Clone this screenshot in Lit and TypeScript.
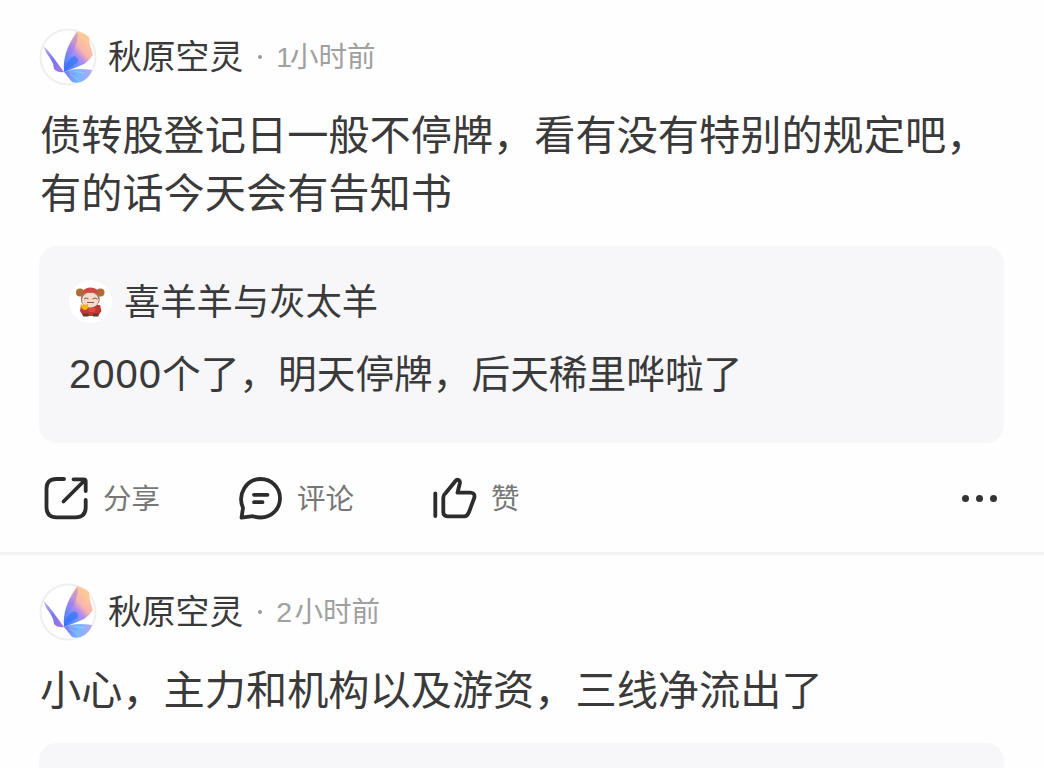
import { LitElement, html, css, svg, nothing } from 'lit';
import { customElement, property } from 'lit/decorators.js';

interface Quote {
  name: string;
  count: string;
  text: string;
}

interface Post {
  name: string;
  num: string;
  time: string;
  lines: string[];
  quote?: Quote;
}

const posts: Post[] = [
  {
    name: '秋原空灵',
    num: '1',
    time: '小时前',
    lines: ['债转股登记日一般不停牌，看有没有特别的规定吧，', '有的话今天会有告知书'],
    quote: { name: '喜羊羊与灰太羊', count: '2000', text: '个了，明天停牌，后天稀里哗啦了' },
  },
  {
    name: '秋原空灵',
    num: '2',
    time: '小时前',
    lines: ['小心，主力和机构以及游资，三线净流出了'],
  },
];

const icons = {
  share: svg`
    <path d="M20 4H12.500Q2.500 4 2.500 14V32Q2.500 42.300 12.500 42.300H31.500Q41.700 42.300 41.700 32V25" />
    <path d="M19.500 26.500L41 5M29.500 4.300H39.500Q41.700 4.300 41.700 6.500V16" />`,
  comment: svg`
    <path d="M3.500 42.700L5 33C-1 19 8.500 4 22.700 4C33.500 4 42 12.500 42 23.300C42 34 33.500 42.500 22.700 42.500Q18.500 42.500 15 41.200Z" />
    <path d="M16 19.800H29.500M16 27.200H24.500" />`,
  like: svg`
    <path d="M3.300 18.500V41" />
    <path d="M11.300 22.500Q11.300 20 13.500 18.300L23.500 6Q25 4 27 5.300Q28.300 6.300 27.800 8.500L25.500 17.700H38.500Q43.500 18 42.200 23L37 37Q35.500 41.300 32 41.300H15.500Q11.300 41.300 11.300 37Z" />`,
};

@customElement('butterfly-avatar')
export class ButterflyAvatar extends LitElement {
  static styles = css`
    :host {
      display: block;
      width: 58px;
      height: 58px;
    }
    svg {
      display: block;
    }
  `;

  render() {
    return html`
      <svg width="58" height="58" viewBox="0 0 58 58">
        <defs>
          <linearGradient id="wing" gradientUnits="userSpaceOnUse" x1="25" y1="42" x2="52" y2="18">
            <stop offset="0" stop-color="#3f75fa" />
            <stop offset=".35" stop-color="#6b93ff" />
            <stop offset=".55" stop-color="#b58bed" />
            <stop offset=".73" stop-color="#f8b3b0" />
            <stop offset="1" stop-color="#ffc898" />
          </linearGradient>
          <linearGradient id="left" x1="0" y1="0" x2="1" y2="1">
            <stop offset="0" stop-color="#c9b4f2" />
            <stop offset=".5" stop-color="#7777ee" />
            <stop offset="1" stop-color="#ad72e8" />
          </linearGradient>
          <linearGradient id="tail" x1="0" y1="0" x2="1" y2="0">
            <stop offset="0" stop-color="#7477f2" />
            <stop offset=".5" stop-color="#75b9ff" />
            <stop offset="1" stop-color="#b7a4f4" />
          </linearGradient>
          <filter id="soft" x="-10%" y="-10%" width="120%" height="120%">
            <feGaussianBlur stdDeviation=".6" />
          </filter>
        </defs>
        <circle cx="29" cy="29" r="27.500" fill="#fff" stroke="#efeff1" stroke-width="2" />
        <g filter="url(#soft)">
          <path fill="url(#left)" d="M4.500 18Q9 22 14 29L25 44Q19 45 15 41Q15 36 11.500 31Q6.500 25 4.500 18Z" />
          <path fill="url(#wing)" d="M25 44Q23 24 38 3.500Q44 4 50 9Q50 15 54 27Q51 32 45 36Q36 40 25 44Z" />
          <path fill="#8b78f0" opacity=".45" d="M26 35Q28 18 38 4Q41 16 26 35Z" />
          <path fill="#2f70fb" opacity=".65" d="M25 43Q27 32 35 28Q41 30 38 35Q31 39 25 43Z" />
          <path fill="url(#tail)" d="M25 44Q37 39 53 42Q51 49 44 53Q38 56 33 54Q29 49 25 44Z" />
          <path fill="none" stroke="#a5d0ff" stroke-width="1" opacity=".6" d="M30 44Q38 43 46 45M31 46Q37 49 40 53" />
        </g>
      </svg>
    `;
  }
}

@customElement('lamb-avatar')
export class LambAvatar extends LitElement {
  static styles = css`
    :host {
      display: block;
      width: 44px;
      height: 44px;
    }
    svg {
      display: block;
    }
  `;

  render() {
    return html`
      <svg width="44" height="44" viewBox="0 0 44 44">
        <defs>
          <filter id="soft">
            <feGaussianBlur stdDeviation=".5" />
          </filter>
        </defs>
        <circle cx="21.500" cy="22.500" r="21.500" fill="#fff" />
        <g filter="url(#soft)">
          <circle cx="11" cy="13.500" r="4" fill="#b06c35" />
          <circle cx="31.500" cy="13.500" r="4" fill="#b06c35" />
          <path fill="#bd3b30" d="M12 26H31L32.500 32L29 37H14L11 32Z" />
          <ellipse cx="21.300" cy="20" rx="9.500" ry="9" fill="#a9705d" />
          <ellipse cx="21.300" cy="21" rx="8.300" ry="7.500" fill="#f4dacb" />
          <path fill="#cf4943" d="M12.500 15Q14 8.500 21.500 8.500Q29 8.500 30.500 15Q25 12 21.500 14Q17 12 12.500 15Z" />
          <path fill="none" stroke="#82594e" stroke-width="1" d="M15 20Q17 18 19.500 20M23.500 20Q26 18 28.500 20M18 23.500H25" />
          <path fill="#edb719" d="M11.500 25L14 26L19 25Q20 31 15.500 31Q12 30 11.500 25Z" />
          <path fill="#dd4b3a" d="M19 29H27L26 33H20Z" />
          <path fill="#73302b" d="M14 34.500H19.500V37.500H14ZM24 34.500H29.500V37.500H24Z" />
        </g>
      </svg>
    `;
  }
}

@customElement('post-card')
export class PostCard extends LitElement {
  @property({ type: Object }) post!: Post;

  static styles = css`
    :host {
      display: block;
      padding: 28px 40px 0 39px;
      color: #3a3a3a;
    }
    .head {
      display: flex;
      align-items: center;
      height: 58px;
      white-space: nowrap;
    }
    .name {
      margin-left: 11px;
      padding-bottom: 5px;
      font-size: 33.8px;
    }
    .dot {
      width: 4px;
      height: 4px;
      margin: 0 14px 0 15px;
      border-radius: 50%;
      background: #999;
    }
    .time {
      padding-bottom: 6px;
      font-size: 28.5px;
      color: #a0a0a0;
    }
    .num {
      font-family: 'Liberation Sans', sans-serif;
    }
    .time .num {
      letter-spacing: 2.5px;
    }
    .time .num.one {
      letter-spacing: -2px;
    }
    .body {
      margin-top: 17px;
      padding-left: 1px;
      font-size: 41.2px;
      line-height: 58px;
      white-space: nowrap;
    }
    .quote {
      box-sizing: border-box;
      height: 197px;
      margin-top: 27px;
      padding: 33px 30px 0;
      border-radius: 18px;
      background: #f7f7fa;
      white-space: nowrap;
    }
    .quote-head {
      display: flex;
      align-items: center;
      gap: 11px;
      height: 44px;
      font-size: 36.3px;
    }
    .quote-head span {
      padding-bottom: 4px;
    }
    .quote-text {
      margin-top: 20px;
      font-size: 38.7px;
      line-height: 56px;
    }
    .quote-text .num {
      font-size: 40px;
      letter-spacing: 1px;
    }
    .actions {
      display: flex;
      align-items: center;
      height: 109px;
      font-size: 28.5px;
      color: #777;
    }
    .action {
      display: flex;
      align-items: center;
      gap: 12px;
      width: 194px;
    }
    .action span {
      padding-bottom: 2px;
    }
    .icon {
      margin: 2px 0 0 5px;
      fill: none;
      stroke: #2c2c2c;
      stroke-width: 3.8;
      stroke-linecap: round;
      stroke-linejoin: round;
    }
    .more {
      display: flex;
      gap: 7px;
      margin: 1px 7px 0 auto;
    }
    .more i {
      width: 7px;
      height: 7px;
      border-radius: 50%;
      background: #333;
    }
  `;

  renderAction(icon: unknown, label: string) {
    return html`
      <div class="action">
        <svg class="icon" width="47" height="47" viewBox="0 0 47 47">${icon}</svg>
        <span>${label}</span>
      </div>
    `;
  }

  renderQuote(quote: Quote) {
    return html`
      <div class="quote-head">
        <lamb-avatar></lamb-avatar>
        <span>${quote.name}</span>
      </div>
      <div class="quote-text"><span class="num">${quote.count}</span>${quote.text}</div>
    `;
  }

  renderActions() {
    return html`
      <div class="actions">
        ${this.renderAction(icons.share, '分享')}
        ${this.renderAction(icons.comment, '评论')}
        ${this.renderAction(icons.like, '赞')}
        <div class="more"><i></i><i></i><i></i></div>
      </div>
    `;
  }

  render() {
    const { name, num, time, lines, quote } = this.post;
    return html`
      <div class="head">
        <butterfly-avatar></butterfly-avatar>
        <span class="name">${name}</span>
        <span class="dot"></span>
        <span class="time"><span class="num ${num === '1' ? 'one' : ''}">${num}</span>${time}</span>
      </div>
      <div class="body">${lines.map((line) => html`<div>${line}</div>`)}</div>
      <div class="quote">${quote ? this.renderQuote(quote) : nothing}</div>
      ${quote ? this.renderActions() : nothing}
    `;
  }
}

@customElement('app-root')
export class AppRoot extends LitElement {
  static styles = css`
    :host {
      display: block;
      height: 768px;
      overflow: hidden;
      background: #fefefe;
      font-family: 'Noto Sans CJK SC', sans-serif;
    }
    .item {
      display: block;
      border-bottom: 3px solid #f3f3f4;
    }
  `;

  render() {
    return html`${posts.map((post) => html`<post-card class="item" .post=${post}></post-card>`)}`;
  }
}
